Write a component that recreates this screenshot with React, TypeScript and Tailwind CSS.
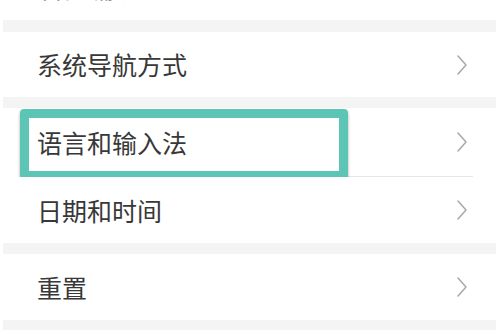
import React from "react";

const FONT = "font-['Noto_Sans_CJK_SC','Noto_Sans',sans-serif]";

function Chevron() {
  return (
    <svg width="12" height="22" viewBox="0 0 12 22" className="shrink-0">
      <polyline
        points="2,2 10,11 2,20"
        fill="none"
        stroke="#a8a8a8"
        strokeWidth="1.5"
        strokeLinecap="round"
        strokeLinejoin="round"
      />
    </svg>
  );
}

function Row({
  label,
  h,
  highlight = false,
}: {
  label: string;
  h: string;
  highlight?: boolean;
}) {
  return (
    <div className={`relative flex items-center justify-between bg-white pl-[34px] pr-[28px] ${h}`}>
      <span className="text-[25px] leading-none text-[#383838]">{label}</span>
      <Chevron />
      {highlight && (
        <div className="pointer-events-none absolute left-[17px] top-[1px] h-[71px] w-[328px] rounded-[4px] border-[9px] border-[#5cc5b5] shadow-[0_2px_3px_rgba(0,0,0,0.35)]" />
      )}
    </div>
  );
}

export default function App() {
  return (
    <div className={`h-[330px] w-[496px] overflow-hidden bg-white pl-[3px] ${FONT}`}>
      <div className="flex h-full flex-col bg-[#f4f4f4]">
        <div className="flex h-[20px] items-end overflow-hidden bg-white pl-[36px]">
          <span className="mb-[20px] text-[25px] leading-none text-[#383838]">智能辅助</span>
        </div>
        <div className="h-[12px]" />
        <Row label="系统导航方式" h="h-[65px]" />
        <div className="h-[11px]" />
        <div className="flex flex-col bg-white">
          <Row label="语言和输入法" h="h-[68px]" highlight />
          <div className="ml-[34px] mr-[23px] h-px bg-[#e6e6e6]" />
          <Row label="日期和时间" h="h-[66px]" />
        </div>
        <div className="h-[11px]" />
        <Row label="重置" h="h-[66px]" />
      </div>
    </div>
  );
}
